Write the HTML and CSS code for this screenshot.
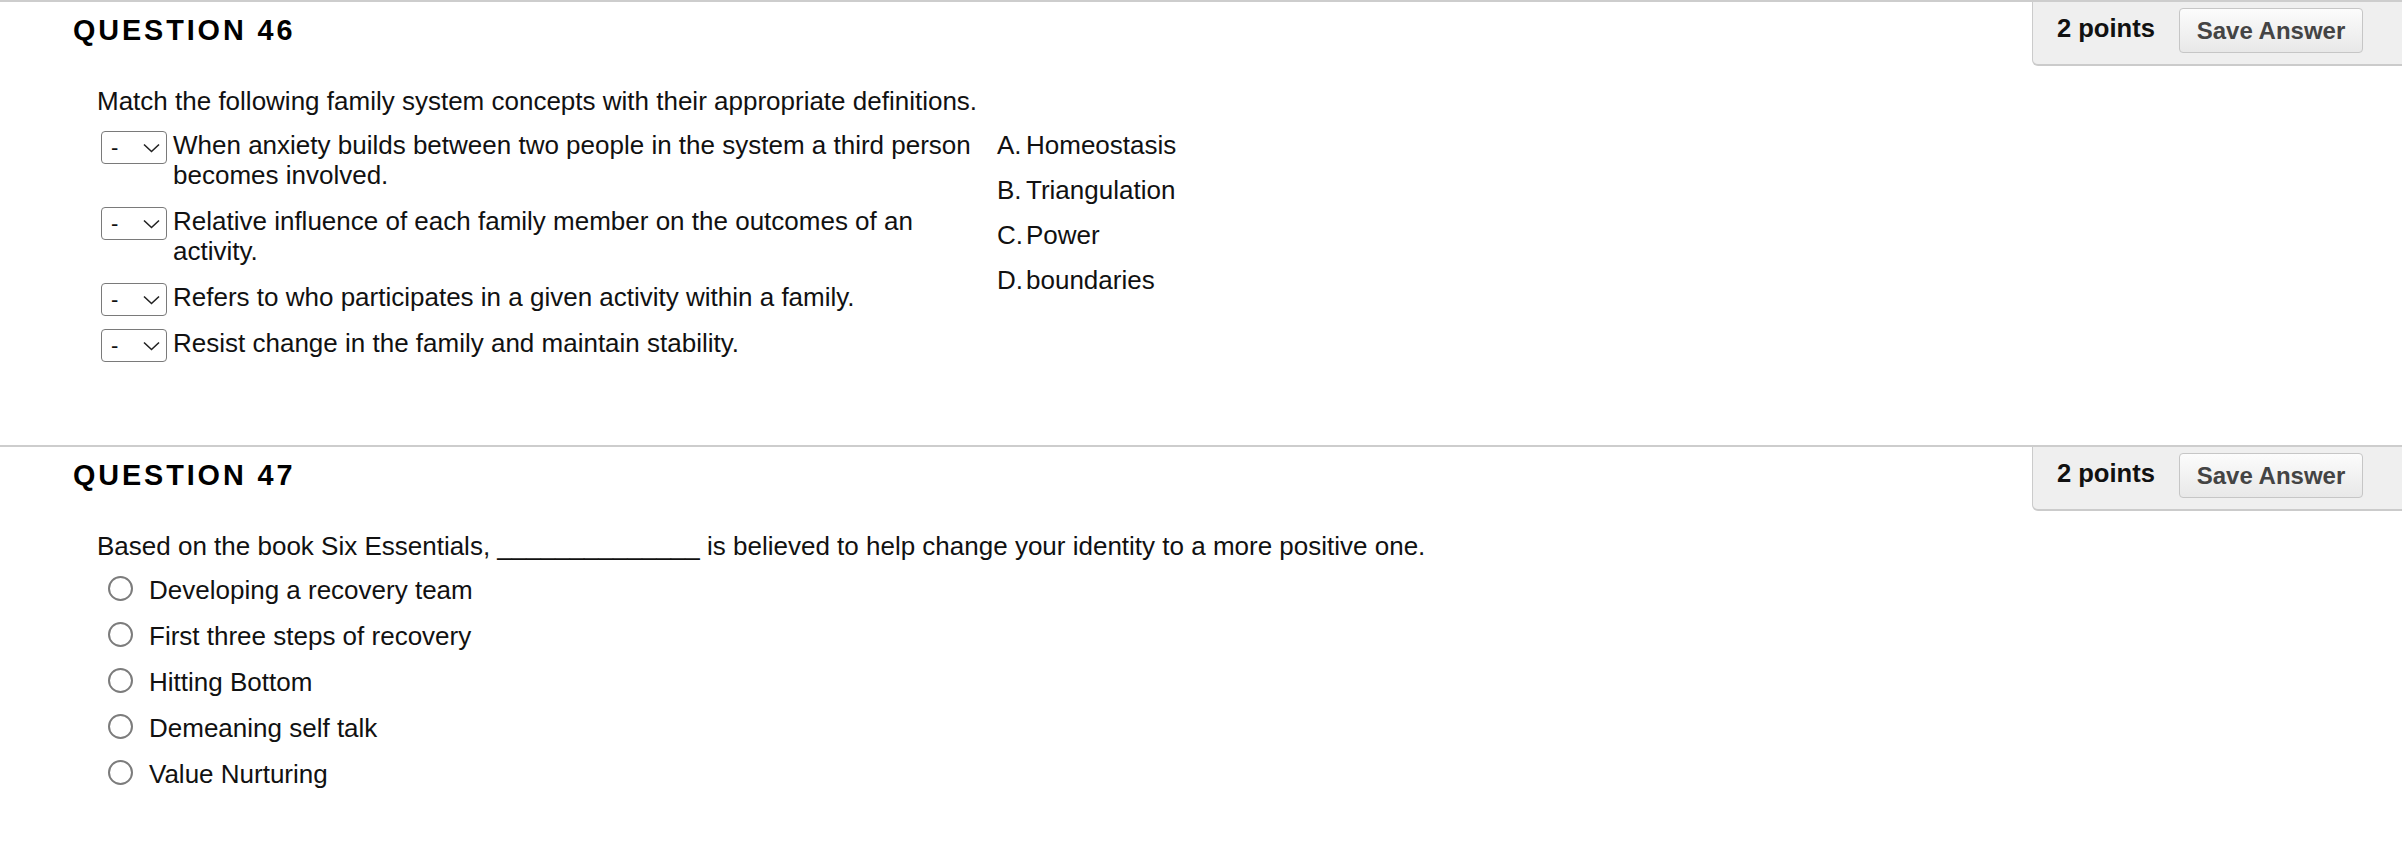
FILE: index.html
```html
<!DOCTYPE html>
<html lang="en">
	<head>
		<meta charset="UTF-8" />
		<meta name="viewport" content="width=device-width, initial-scale=1.0" />
		<title>Test</title>
		<link rel="stylesheet" href="styles.css">
	</head>

	<body>
		<div class="question">
			<div class="q-head">
				<h3>QUESTION 46</h3>
				<div class="points-box">
					<span class="points">2 points</span>
					<button class="save-btn">Save Answer</button>
				</div>
			</div>
			<div class="q-body">
				<p class="prompt">Match the following family system concepts with their appropriate definitions.</p>
				<div class="match">
					<div class="match-list">
						<div class="match-row">
							<div class="select-box"><span>-</span><svg width="17" height="10" viewBox="0 0 17 10"><path d="M1 1.5 L8.5 8.5 L16 1.5" fill="none" stroke="#222" stroke-width="1.6"/></svg></div>
							<div class="match-text">When anxiety builds between two people in the system a third person becomes involved.</div>
						</div>
						<div class="match-row">
							<div class="select-box"><span>-</span><svg width="17" height="10" viewBox="0 0 17 10"><path d="M1 1.5 L8.5 8.5 L16 1.5" fill="none" stroke="#222" stroke-width="1.6"/></svg></div>
							<div class="match-text">Relative influence of each family member on the outcomes of an activity.</div>
						</div>
						<div class="match-row">
							<div class="select-box"><span>-</span><svg width="17" height="10" viewBox="0 0 17 10"><path d="M1 1.5 L8.5 8.5 L16 1.5" fill="none" stroke="#222" stroke-width="1.6"/></svg></div>
							<div class="match-text">Refers to who participates in a given activity within a family.</div>
						</div>
						<div class="match-row">
							<div class="select-box"><span>-</span><svg width="17" height="10" viewBox="0 0 17 10"><path d="M1 1.5 L8.5 8.5 L16 1.5" fill="none" stroke="#222" stroke-width="1.6"/></svg></div>
							<div class="match-text">Resist change in the family and maintain stability.</div>
						</div>
					</div>
					<div class="answer-list">
						<div class="answer"><span class="letter">A.</span>Homeostasis</div>
						<div class="answer"><span class="letter">B.</span>Triangulation</div>
						<div class="answer"><span class="letter">C.</span>Power</div>
						<div class="answer"><span class="letter">D.</span>boundaries</div>
					</div>
				</div>
			</div>
		</div>

		<div class="question">
			<div class="q-head">
				<h3>QUESTION 47</h3>
				<div class="points-box">
					<span class="points">2 points</span>
					<button class="save-btn">Save Answer</button>
				</div>
			</div>
			<div class="q-body">
				<p class="prompt">Based on the book Six Essentials, ______________ is believed to help change your identity to a more positive one.</p>
				<div class="radio-list">
					<label class="radio-row"><span class="radio"></span>Developing a recovery team</label>
					<label class="radio-row"><span class="radio"></span>First three steps of recovery</label>
					<label class="radio-row"><span class="radio"></span>Hitting Bottom</label>
					<label class="radio-row"><span class="radio"></span>Demeaning self talk</label>
					<label class="radio-row"><span class="radio"></span>Value Nurturing</label>
				</div>
			</div>
		</div>
	</body>
</html>
```

FILE: styles.css
```css
html, body {
	margin: 0;
	padding: 0;
	background: #fff;
	font-family: 'Liberation Sans', Arial, Helvetica, sans-serif;
	color: #111;
}

h3, p {
	margin: 0;
}

.question {
	border-top: 2px solid #cdcdcd;
}

.q-head {
	display: flex;
	align-items: flex-start;
}

.q-head h3 {
	margin: 11px 0 0 73px;
	font-size: 28.8px;
	line-height: 34px;
	letter-spacing: 2.9px;
	font-weight: bold;
	color: #000;
}

.points-box {
	margin-left: auto;
	display: flex;
	align-items: flex-start;
	padding: 6px 39px 11px 24px;
	background: #efefef;
	border-left: 1px solid #cbcbcb;
	border-bottom: 2px solid #cbcbcb;
	border-bottom-left-radius: 6px;
}

.points {
	margin-top: 5px;
	font-size: 25.6px;
	line-height: 30px;
	font-weight: bold;
	color: #111;
}

.save-btn {
	box-sizing: border-box;
	margin-left: 24px;
	width: 184px;
	height: 45px;
	padding: 0;
	font-family: inherit;
	font-size: 24px;
	font-weight: bold;
	color: #444;
	background: linear-gradient(#fcfcfc, #e8e8e8);
	border: 1px solid #c6c6c6;
	border-radius: 4px;
}

.q-body {
	padding: 20px 0 87px 97px;
	font-size: 26px;
	line-height: 30px;
}

.prompt {
	margin-bottom: 14px;
}

.match {
	display: flex;
	align-items: flex-start;
}

.match-list {
	display: flex;
	flex-direction: column;
	gap: 16px;
	width: 887px;
	margin-left: 4px;
}

.match-row {
	display: flex;
	align-items: flex-start;
}

.select-box {
	box-sizing: border-box;
	flex: none;
	display: flex;
	align-items: center;
	justify-content: space-between;
	width: 66px;
	height: 33px;
	margin: 1px 6px -4px 0;
	padding: 0 6px 0 9px;
	border: 1px solid #7a7a7a;
	border-radius: 4px;
	font-size: 22px;
}

.select-box svg {
	margin-top: 1px;
}

.match-text {
	flex: 1;
}

.answer-list {
	display: flex;
	flex-direction: column;
	gap: 15px;
	margin-left: 9px;
}

.letter {
	display: inline-block;
	width: 29px;
}

.radio-list {
	display: flex;
	flex-direction: column;
	gap: 16px;
	margin-top: 1px;
}

.radio-row {
	display: flex;
	align-items: flex-start;
}

.radio {
	box-sizing: border-box;
	flex: none;
	width: 25px;
	height: 25px;
	margin: 1px 16px 0 11px;
	border: 2px solid #7c7c7c;
	border-radius: 50%;
	background: #fff;
}
```
